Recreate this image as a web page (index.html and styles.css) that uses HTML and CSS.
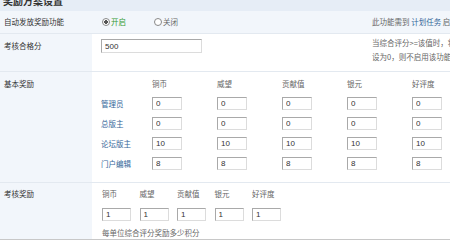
FILE: index.html
```html
<!DOCTYPE html>
<html lang="zh-CN">
<head>
    <meta charset="UTF-8">
    <meta name="viewport" content="width=device-width, initial-scale=1.0">
    <title>奖励方案设置</title>
    <link rel="stylesheet" href="styles.css">
</head>
<body>
    <div class="page">
        <h3 class="title">奖励方案设置</h3>

        <div class="row row-auto">
            <div class="label">自动发放奖励功能</div>
            <div class="field split">
                <div class="radios">
                    <label class="radio on"><input type="radio" name="auto" checked>开启</label>
                    <label class="radio"><input type="radio" name="auto">关闭</label>
                </div>
                <div class="note">此功能需到 <a href="#">计划任务</a> 启用并设置执行时间</div>
            </div>
        </div>

        <div class="row row-pass">
            <div class="label">考核合格分</div>
            <div class="field split">
                <div><input class="text" type="text" value="500"></div>
                <div class="note">当综合评分&gt;=该值时，将按比例发放奖励<br>设为0，则不启用该功能</div>
            </div>
        </div>

        <div class="row row-basic">
            <div class="label">基本奖励</div>
            <div class="field">
                <div class="grid">
                    <span></span>
                    <span class="head">铜币</span>
                    <span class="head">威望</span>
                    <span class="head">贡献值</span>
                    <span class="head">银元</span>
                    <span class="head">好评度</span>

                    <a href="#" class="who">管理员</a>
                    <input class="num" value="0"><input class="num" value="0"><input class="num" value="0"><input class="num" value="0"><input class="num" value="0">

                    <a href="#" class="who">总版主</a>
                    <input class="num" value="0"><input class="num" value="0"><input class="num" value="0"><input class="num" value="0"><input class="num" value="0">

                    <a href="#" class="who">论坛版主</a>
                    <input class="num" value="10"><input class="num" value="10"><input class="num" value="10"><input class="num" value="10"><input class="num" value="10">

                    <a href="#" class="who">门户编辑</a>
                    <input class="num" value="8"><input class="num" value="8"><input class="num" value="8"><input class="num" value="8"><input class="num" value="8">
                </div>
            </div>
        </div>

        <div class="row row-check">
            <div class="label">考核奖励</div>
            <div class="field">
                <div class="grid-small">
                    <span class="head">铜币</span>
                    <span class="head">威望</span>
                    <span class="head">贡献值</span>
                    <span class="head">银元</span>
                    <span class="head">好评度</span>
                    <input class="num" value="1"><input class="num" value="1"><input class="num" value="1"><input class="num" value="1"><input class="num" value="1">
                </div>
                <div class="tip">每单位综合评分奖励多少积分</div>
            </div>
        </div>
    </div>
</body>
</html>
```

FILE: styles.css
```css
html, body {
    margin: 0;
    overflow: hidden;
}
body {
    font-family: "Noto Sans CJK SC", "Liberation Sans", sans-serif;
    font-size: 7.5px;
    line-height: 10px;
    color: #333;
    background-color: #fff;
}
a {
    color: #336699;
    text-decoration: none;
}
.page {
    margin-top: -10px;
}
.title {
    margin: 0;
    height: 21px;
    line-height: 21px;
    padding-left: 3px;
    font-size: 10px;
    font-weight: bold;
    color: #333;
    background-color: #e6edf6;
}
.row {
    display: grid;
    grid-template-columns: 92px 1fr;
    border-bottom: 1px solid #e3e9f0;
}
.label {
    background-color: #f2f6fb;
    padding-left: 4px;
    white-space: nowrap;
}
.field {
    padding-left: 9px;
}
.split {
    display: grid;
    grid-template-columns: 271px 1fr;
}
.note {
    color: #666;
    white-space: nowrap;
}

/* 自动发放 */
.row-auto {
    height: 22px;
    background-color: #f2f6fb;
}
.row-auto .label, .row-auto .field {
    display: flex;
    align-items: center;
}
.row-auto .split {
    display: grid;
    align-items: center;
}
.radios {
    display: flex;
    gap: 28px;
    padding-left: 1px;
}
.radio {
    display: flex;
    align-items: center;
    color: #666;
}
.radio.on {
    color: #339933;
}
.radio input {
    appearance: none;
    width: 8px;
    height: 8px;
    margin: 0 1px 0 0;
    border: 1px solid #888;
    border-radius: 50%;
    background-color: #fff;
}
.radio input:checked {
    background: radial-gradient(circle, #555 0 1.6px, #fff 2px);
}

/* 考核合格分 */
.row-pass {
    height: 37px;
}
.row-pass .label {
    padding-top: 7px;
}
.row-pass .field {
    padding-top: 5px;
}
.row-pass .note {
    margin-top: -3px;
    line-height: 14px;
}
.text {
    display: block;
    box-sizing: border-box;
    width: 101px;
    height: 14px;
    margin: 0;
    padding: 0 3px;
    border: 1px solid;
    border-color: #a9a9a9 #dcdcdc #dcdcdc #a9a9a9;
    font-family: "Liberation Sans", sans-serif;
    font-size: 8px;
    color: #333;
}

/* 奖励表格 */
.num {
    box-sizing: border-box;
    width: 30px;
    height: 13px;
    margin: 0;
    padding: 0 3px;
    border: 1px solid;
    border-color: #a9a9a9 #dcdcdc #dcdcdc #a9a9a9;
    font-family: "Liberation Sans", sans-serif;
    font-size: 8px;
    color: #333;
}
.head {
    color: #666;
    white-space: nowrap;
}
.row-basic .label {
    padding-top: 7px;
}
.row-basic .field {
    padding: 7px 0 12px 9px;
}
.grid {
    display: grid;
    grid-template-columns: 51px repeat(5, 65px);
    grid-template-rows: 11px repeat(4, 13px);
    row-gap: 7px;
    align-items: center;
}
.grid .head {
    align-self: start;
}
.who {
    white-space: nowrap;
}
.row-check {
    border-bottom-color: #c8c8c8;
}
.row-check .label {
    padding-top: 6px;
}
.row-check .field {
    padding: 6px 0 1px 10px;
}
.grid-small {
    display: grid;
    grid-template-columns: repeat(5, 37.5px);
    grid-template-rows: 10px 13px;
    row-gap: 9px;
}
.grid-small .num {
    width: 29px;
}
.tip {
    margin-top: 7px;
    color: #666;
}
```
